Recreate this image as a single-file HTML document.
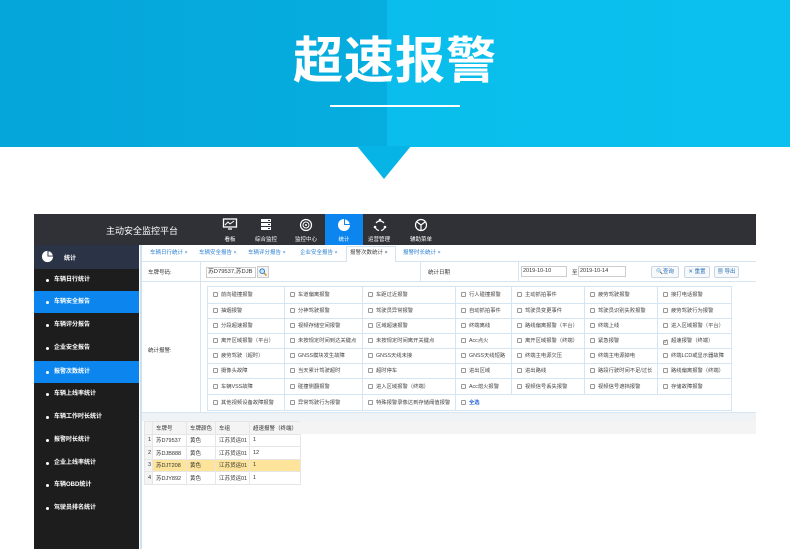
<!DOCTYPE html>
<html><head><meta charset="utf-8"><style>
*{margin:0;padding:0;box-sizing:border-box}
body{width:790px;height:549px;overflow:hidden;background:#fff;font-family:"Liberation Sans","Noto Sans CJK SC",sans-serif;position:relative}
.a{position:absolute}
.banner{left:0;top:0;width:790px;height:147px;background:linear-gradient(90deg,#05a6da 0%,#06addf 49%,#0abdec 49%,#0bc0ee 100%)}
.tri{left:357px;top:146px;width:0;height:0;border-left:27px solid transparent;border-right:27px solid transparent;border-top:33px solid #07b4e6}
.title{left:0;width:790px;top:30px;text-align:center;color:#fff;font-size:50px;font-weight:bold;letter-spacing:1px;line-height:62px}
.uline{left:330px;top:105px;width:130px;height:2px;background:#fff}
.nav{left:34px;top:214px;width:722px;height:31px;background:#2f3137}
.navt{color:#fff;font-size:9px}
.ni{color:#fff;font-size:5.5px;text-align:center;width:38px}
.side{left:34px;top:245px;width:105px;height:304px;background:#1d1d1d}
.si{left:34px;width:105px;height:22px;color:#fff;font-size:6px;font-weight:bold;padding-left:20px;line-height:22px}
.si:before{content:"";position:absolute;left:12px;top:9.5px;width:3px;height:3px;border-radius:50%;background:#fff}
.on{background:#0c86ee}
.content{left:140px;top:245px;width:616px;height:304px;background:#fff;border-left:2px solid #cfe0ef}
.tabs{left:142px;top:245px;width:614px;height:17px;background:#fff;border-bottom:1px solid #d5e3ef}
.tab{top:248px;font-size:5.5px;color:#2a7fd0}
.t6{font-size:5.5px;color:#333}
.cell{border:1px solid #d6e5f2;position:absolute;font-size:5.3px;color:#444;line-height:14px;padding-left:5px;white-space:nowrap;overflow:hidden}
.cb{display:inline-block;width:5px;height:5px;border:1px solid #999;border-radius:1px;margin-right:3px;vertical-align:-1px;background:#fafafa}
.btn{border:1px solid #c8d6e3;border-radius:2px;background:#f6f8fa;font-size:5.5px;color:#2a6fb8;height:12px;line-height:10px;text-align:center}
.tb td{font-size:5.5px;color:#333;border:1px solid #e6e6e6;height:12.5px;padding-left:3px;white-space:nowrap}
</style></head><body>
<div class="a banner"></div>
<div class="a tri"></div>
<div class="a title">超速报警</div>
<div class="a uline"></div>

<div class="a nav"></div>
<div class="a navt" style="left:106px;top:224px">主动安全监控平台</div>
<div class="a" style="left:325px;top:214px;width:38px;height:31px;background:#0c86ee"></div>
<!-- icons -->
<svg class="a" style="left:222px;top:218px" width="16" height="13" viewBox="0 0 16 13"><rect x="1.5" y="1" width="13" height="8" fill="none" stroke="#fff" stroke-width="1.3"/><path d="M3 7l3-3 2 2 4-3" fill="none" stroke="#fff" stroke-width="1"/><path d="M6 11h4" stroke="#fff" stroke-width="1.3"/></svg>
<svg class="a" style="left:260px;top:218px" width="12" height="13" viewBox="0 0 12 13"><rect x="1" y="1" width="10" height="3" fill="#fff"/><rect x="1" y="5" width="10" height="3" fill="#fff"/><rect x="1" y="9" width="10" height="3" fill="#fff"/><path d="M8 2.5h2M8 6.5h2M8 10.5h2" stroke="#2f3137"/></svg>
<svg class="a" style="left:299px;top:218px" width="14" height="14" viewBox="0 0 14 14"><circle cx="7" cy="7" r="5.5" fill="none" stroke="#fff" stroke-width="1.2"/><circle cx="7" cy="7" r="3" fill="none" stroke="#fff" stroke-width="1"/><circle cx="7" cy="7" r="1" fill="#fff"/></svg>
<svg class="a" style="left:337px;top:218px" width="14" height="14" viewBox="0 0 14 14"><circle cx="7" cy="7" r="6" fill="#fff"/><path d="M7 7V1A6 6 0 0 1 13 7Z" fill="#0c86ee"/><path d="M8 6V1.5A5 5 0 0 1 12.5 6Z" fill="#fff"/></svg>
<svg class="a" style="left:373px;top:218px" width="14" height="14" viewBox="0 0 14 14"><path d="M3 5A5 5 0 0 1 11 5M12 8A5 5 0 0 1 8 12.5M6 12.5A5 5 0 0 1 2 8" fill="none" stroke="#fff" stroke-width="1.2"/><circle cx="7" cy="2" r="1.3" fill="#fff"/><circle cx="2" cy="9" r="1.3" fill="#fff"/><circle cx="12" cy="9" r="1.3" fill="#fff"/></svg>
<svg class="a" style="left:414px;top:218px" width="14" height="14" viewBox="0 0 14 14"><circle cx="7" cy="7" r="5.5" fill="none" stroke="#fff" stroke-width="1.2"/><path d="M3 4l4 3 4-3M7 7v5" fill="none" stroke="#fff" stroke-width="1.2"/></svg>
<div class="a ni" style="left:211px;top:235px">看板</div>
<div class="a ni" style="left:247px;top:235px">综合监控</div>
<div class="a ni" style="left:287px;top:235px">监控中心</div>
<div class="a ni" style="left:325px;top:235px">统计</div>
<div class="a ni" style="left:360px;top:235px">运营管理</div>
<div class="a ni" style="left:402px;top:235px">辅助菜单</div>

<div class="a side"></div>
<div class="a" style="left:34px;top:245px;width:105px;height:24px;background:#2b3346"></div>
<svg class="a" style="left:41px;top:250px" width="13" height="13" viewBox="0 0 14 14"><circle cx="7" cy="7" r="6" fill="#fff"/><path d="M7 7V1A6 6 0 0 1 13 7Z" fill="#2b3346"/><path d="M8 6V1.5A5 5 0 0 1 12.5 6Z" fill="#fff"/></svg>
<div class="a" style="left:64px;top:253px;color:#fff;font-size:6px;font-weight:bold">统计</div>
<div class="a si" style="top:269px">车辆日行统计</div>
<div class="a si on" style="top:291px">车辆安全报告</div>
<div class="a si" style="top:314px">车辆评分报告</div>
<div class="a si" style="top:337px">企业安全报告</div>
<div class="a si on" style="top:361px">报警次数统计</div>
<div class="a si" style="top:383px">车辆上线率统计</div>
<div class="a si" style="top:406px">车辆工作时长统计</div>
<div class="a si" style="top:429px">报警时长统计</div>
<div class="a si" style="top:452px">企业上线率统计</div>
<div class="a si" style="top:474px">车辆OBD统计</div>
<div class="a si" style="top:497px">驾驶员排名统计</div>

<div class="a content"></div>
<div class="a tabs"></div>
<div class="a tab" style="left:150px">车辆日行统计 ×</div>
<div class="a tab" style="left:199px">车辆安全报告 ×</div>
<div class="a tab" style="left:248px">车辆评分报告 ×</div>
<div class="a tab" style="left:300px">企业安全报告 ×</div>
<div class="a" style="left:346px;top:246px;width:50px;height:16px;background:#fff;border:1px solid #d5e3ef;border-bottom:none"></div>
<div class="a tab" style="left:350px;color:#444">报警次数统计 ×</div>
<div class="a tab" style="left:403px">报警时长统计 ×</div>

<!-- query row -->
<div class="a" style="left:142px;top:262px;width:614px;height:20px;border-bottom:1px solid #d6e5f2"></div>
<div class="a" style="left:200px;top:262px;width:1px;height:20px;background:#d6e5f2"></div>
<div class="a" style="left:420px;top:262px;width:1px;height:20px;background:#d6e5f2"></div>
<div class="a" style="left:518px;top:262px;width:1px;height:20px;background:#d6e5f2"></div>
<div class="a t6" style="left:148px;top:268px">车牌号码:</div>
<div class="a t6" style="left:206px;top:267px;width:50px;height:11px;border:1px solid #ccc;line-height:9px;padding-left:1px;font-size:5.8px">苏D79537,苏DJB</div>
<div class="a" style="left:257px;top:266px;width:12px;height:12px;border:1px solid #ccc;background:#f3f3f3"></div>
<svg class="a" style="left:259px;top:268px" width="8" height="8" viewBox="0 0 8 8"><circle cx="3.2" cy="3.2" r="2.3" fill="#cfe6fa" stroke="#2a7fd0"/><path d="M5 5l2.5 2.5" stroke="#d08a20" stroke-width="1.3"/></svg>
<div class="a t6" style="left:428px;top:268px">统计日期</div>
<div class="a t6" style="left:521px;top:266px;width:46px;height:11px;border:1px solid #ccc;line-height:9px;padding-left:1px">2019-10-10</div>
<div class="a t6" style="left:572px;top:268px">至</div>
<div class="a t6" style="left:578px;top:266px;width:48px;height:11px;border:1px solid #ccc;line-height:9px;padding-left:1px">2019-10-14</div>
<div class="a btn" style="left:651px;top:266px;width:28px">🔍查询</div>
<div class="a btn" style="left:684px;top:266px;width:26px">✕ 重置</div>
<div class="a btn" style="left:714px;top:266px;width:25px">▦ 导出</div>

<!-- stats -->
<div class="a" style="left:142px;top:282px;width:614px;height:131px;border-bottom:1px solid #d6e5f2"></div>
<div class="a" style="left:200px;top:282px;width:1px;height:131px;background:#d6e5f2"></div>
<div class="a t6" style="left:148px;top:346px">统计报警:</div>
<div id="g"></div>
<div class="a" style="left:142px;top:413px;width:614px;height:8px;background:#f0f3f6"></div>

<!-- table -->
<table class="a tb" style="left:144px;top:421px;border-collapse:collapse">
<tr style="background:#f4f4f4"><td style="width:8px"></td><td style="width:34px">车牌号</td><td style="width:29px">车牌颜色</td><td style="width:34px">车组</td><td style="width:51px">超速报警（终端）</td></tr>
<tr><td style="background:#f4f4f4">1</td><td>苏D79537</td><td>黄色</td><td>江苏货运01</td><td>1</td></tr>
<tr><td style="background:#f4f4f4">2</td><td>苏DJB888</td><td>黄色</td><td>江苏货运01</td><td>12</td></tr>
<tr style="background:#fde49a"><td style="background:#f4f4f4">3</td><td>苏DJT208</td><td>黄色</td><td>江苏货运01</td><td>1</td></tr>
<tr><td style="background:#f4f4f4">4</td><td>苏DJY892</td><td>黄色</td><td>江苏货运01</td><td>1</td></tr>
</table>
<div class="a" style="left:300px;top:421px;width:456px;height:13px;background:#f4f4f4"></div>

<script>
var xs=[207,284,362,455,511,584,657,731];
var ys=[286,303,318,333,348,363,378,394,410];
var L=[
["前向碰撞报警","车道偏离报警","车距过近报警","行人碰撞报警","主动抓拍事件","疲劳驾驶报警","接打电话报警"],
["抽烟报警","分神驾驶报警","驾驶员异常报警","自动抓拍事件","驾驶员变更事件","驾驶员识别失败报警","疲劳驾驶行为报警"],
["分段超速报警","视频存储空间报警","区域超速报警","终端离线","路线偏离报警（平台）","终端上线","进入区域报警（平台）"],
["离开区域报警（平台）","未按规定时间到达关键点","未按规定时间离开关键点","Acc点火","离开区域报警（终端）","紧急报警","超速报警（终端）"],
["疲劳驾驶（超时）","GNSS模块发生故障","GNSS天线未接","GNSS天线短路","终端主电源欠压","终端主电源掉电","终端LCD或显示器故障"],
["摄像头故障","当天累计驾驶超时","超时停车","进出区域","进出路线","路段行驶时间不足/过长","路线偏离报警（终端）"],
["车辆VSS故障","碰撞侧翻报警","进入区域报警（终端）","Acc熄火报警","视频信号丢失报警","视频信号遮挡报警","存储故障报警"],
["其他视频设备故障报警","异常驾驶行为报警","特殊报警录像达到存储阈值报警","全选"]];
var h="";
for(var r=0;r<8;r++)for(var c=0;c<L[r].length;c++){
var w=(r==7&&c==3)?(xs[7]-xs[3]):(xs[c+1]-xs[c]);
var t=L[r][c];var chk=(r==3&&c==6)?'<span class="cb" style="background:#fff;font-size:5px;line-height:3px;text-align:center">✓</span>':'<span class="cb"></span>';
var st=(t=="全选")?' style="color:#1a5fd0;font-weight:bold"':'';
h+='<div class="cell" style="left:'+xs[c]+'px;top:'+ys[r]+'px;width:'+(w+1)+'px;height:'+(ys[r+1]-ys[r]+1)+'px;line-height:'+(ys[r+1]-ys[r])+'px">'+chk+'<span'+st+'>'+t+'</span></div>';}
document.getElementById("g").innerHTML=h;
</script>
</body></html>
